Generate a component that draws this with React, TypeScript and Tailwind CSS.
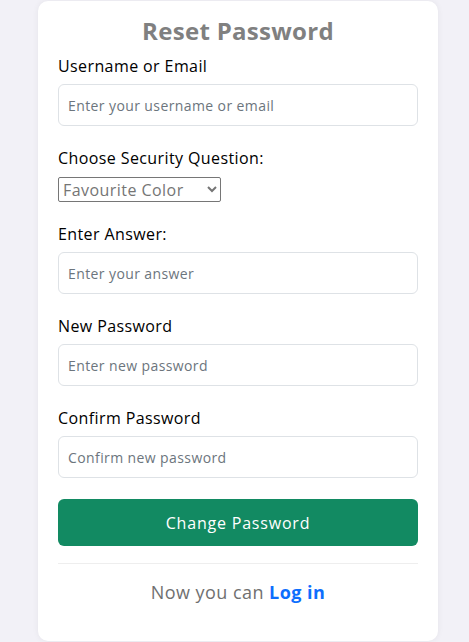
import React from "react";

function Field({ label, placeholder }: { label: string; placeholder: string }) {
  return (
    <div className="flex flex-col mb-5">
      <label className="text-[16px] leading-6 tracking-[0.4px] text-black mb-[6px]">{label}</label>
      <input
        placeholder={placeholder}
        className="h-[42px] w-full rounded-[6px] border border-[#dee2e6] bg-white px-[9px] text-[14px] tracking-[0.4px] text-[#212529] placeholder:text-[#6c757d] outline-none"
      />
    </div>
  );
}

export default function App() {
  return (
    <div
      className="min-h-[642px] w-full bg-[#f2f1f7] pt-px"
      style={{ fontFamily: '"Open Sans", "Liberation Sans", sans-serif' }}
    >
      <div className="ml-[38px] w-[400px] h-[640px] rounded-[10px] bg-white px-5 shadow-[0_0_6px_rgba(0,0,0,0.06)]">
        <h1 className="pt-[14px] text-center text-[24px] font-bold leading-8 tracking-[0.3px] text-[#808080]">Reset Password</h1>
        <div className="mt-[7px]">
          <Field label="Username or Email" placeholder="Enter your username or email" />
          <div className="flex flex-col mb-5">
            <label className="text-[16px] leading-6 tracking-[0.4px] text-black mb-[7px]">Choose Security Question:</label>
            <select className="h-[25px] w-[163px] rounded-[2px] border border-[#767676] bg-white pl-0 text-[16px] tracking-[0.45px] text-[#757575] outline-none">
              <option>Favourite Color</option>
              <option>Pet Name</option>
              <option>Birth City</option>
            </select>
          </div>
          <Field label="Enter Answer:" placeholder="Enter your answer" />
          <Field label="New Password" placeholder="Enter new password" />
          <Field label="Confirm Password" placeholder="Confirm new password" />
        </div>
        <button className="mt-px h-[47px] w-full rounded-[6px] bg-[#128a62] text-[16px] tracking-[0.8px] text-white">Change Password</button>
        <hr className="mt-[17px] border-t border-[#eeeeee]" />
        <p className="mt-[14px] text-center text-[18px] leading-7 tracking-[0.45px] text-[#707070]">
          Now you can <a className="font-bold text-[#0d6efd]" href="#">Log in</a>
        </p>
      </div>
    </div>
  );
}
